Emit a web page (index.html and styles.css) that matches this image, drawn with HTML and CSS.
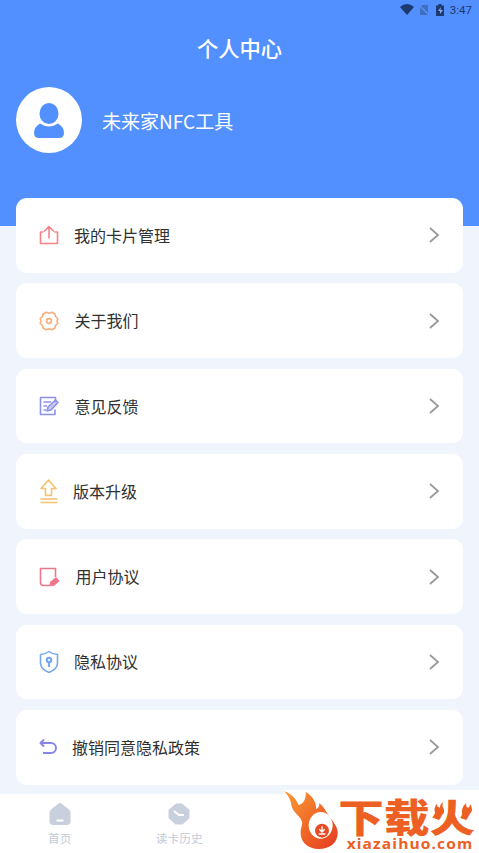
FILE: index.html
```html
<!DOCTYPE html>
<html lang="zh-CN">
<head>
<meta charset="utf-8">
<title>个人中心</title>
<link rel="stylesheet" href="styles.css">
</head>
<body>
<div class="screen">
  <header class="hero">
    <div class="status">
      <svg class="wifi" viewBox="0 0 14 11"><path d="M0 3Q7-3 14 3L7 11Z"/></svg>
      <svg class="sim" viewBox="0 0 10 12"><path d="M3 1h6v10H1V3z"/><path class="slash" d="M0 1l10 10"/></svg>
      <svg class="battery" viewBox="0 0 8 12"><path d="M0 1.500h2.500V0h3v1.500H8V12H0z"/><path class="bolt" d="M5 3L2 7h2v3l3-4H4.500z"/></svg>
      <span class="clock">3:47</span>
    </div>
    <h1 class="title">个人中心</h1>
    <div class="profile">
      <div class="avatar">
        <svg viewBox="0 0 66 66"><ellipse cx="33" cy="26.500" rx="9.500" ry="10.500"/><path d="M24 36.500Q33 42.500 42 36.500Q48 40 48 46Q48 51 43 51H23Q18 51 18 46Q18 40 24 36.500Z"/></svg>
      </div>
      <span class="name">未来家NFC工具</span>
    </div>
  </header>
  <main class="list">
    <a class="card">
      <svg class="icon red" viewBox="0 0 22 26"><path d="M5.500 10H2.500V21.500H19.500V10H16.500M11 16.500V4.500M6 9.500L11 4.500L16 9.500"/></svg>
      <span class="label">我的卡片管理</span><svg class="arrow" viewBox="0 0 12 18"><path d="M2 2L10 9L2 16"/></svg>
    </a>
    <a class="card">
      <svg class="icon orange" viewBox="0 0 22 26"><path d="M8.300 4.300L11 5.200L13.700 4.300L17 6L17.500 8.500L19.800 10.500L19 13L19.800 15.500L17.500 17.500L17 20L13.700 21.700L11 20.800L8.300 21.700L5 20L4.500 17.500L2.200 15.500L3 13L2.200 10.500L4.500 8.500L5 6Z"/><circle cx="11" cy="13" r="2.400"/></svg>
      <span class="label l1">关于我们</span><svg class="arrow" viewBox="0 0 12 18"><path d="M2 2L10 9L2 16"/></svg>
    </a>
    <a class="card">
      <svg class="icon violet" viewBox="0 0 22 26"><path d="M17.500 7.500V4.500H2.500V21.500H17V16.500M5.500 9H13M5.500 13H9M5.500 17H8"/><path class="tint" d="M9 18L10 14L17.500 7L20 9.500L13 17Z"/></svg>
      <span class="label l1">意见反馈</span><svg class="arrow" viewBox="0 0 12 18"><path d="M2 2L10 9L2 16"/></svg>
    </a>
    <a class="card">
      <svg class="icon gold" viewBox="0 0 22 26"><path d="M7.500 17.500V10.500H3L10.500 2L18 10.500H13.500V17.500ZM2.500 21H19.500M2.500 24.500H19.500"/></svg>
      <span class="label l-1">版本升级</span><svg class="arrow" viewBox="0 0 12 18"><path d="M2 2L10 9L2 16"/></svg>
    </a>
    <a class="card">
      <svg class="icon pink" viewBox="0 0 22 26"><path d="M11.500 21.500H5.500Q2.500 21.500 2.500 18.500V4.500H17.500V13"/><path class="tip" d="M12 21.500L13 18L18 14L20.500 17L16 21Z"/></svg>
      <span class="label l2">用户协议</span><svg class="arrow" viewBox="0 0 12 18"><path d="M2 2L10 9L2 16"/></svg>
    </a>
    <a class="card">
      <svg class="icon blue" viewBox="0 0 22 26"><path d="M11 2.500Q14 5 19.500 5.500V14Q19.500 20 11 23.500Q2.500 20 2.500 14V5.500Q8 5 11 2.500Z"/><circle class="thick" cx="11" cy="11" r="2.200"/><path class="thick" d="M11 13V18"/></svg>
      <span class="label">隐私协议</span><svg class="arrow" viewBox="0 0 12 18"><path d="M2 2L10 9L2 16"/></svg>
    </a>
    <a class="card">
      <svg class="icon indigo" viewBox="0 0 22 26"><path d="M6 5.500L2.500 9L6 12.500M3 9H13A5 5 0 0 1 13 19H5"/></svg>
      <span class="label l-2">撤销同意隐私政策</span><svg class="arrow" viewBox="0 0 12 18"><path d="M2 2L10 9L2 16"/></svg>
    </a>
  </main>
  <nav class="tabs">
    <a class="tab"><svg viewBox="0 0 22 22"><path d="M11 0Q12 0 13 1L20 6.500Q21.500 8 21.500 10V18Q21.500 22 17.500 22H4.500Q.500 22 .500 18V10Q.500 8 2 6.500L9 1Q10 0 11 0Z"/><path class="cut" d="M7.500 17.500H14.500"/></svg><span>首页</span></a>
    <a class="tab"><svg viewBox="0 0 22 22"><path d="M8 .500H14L21.500 7V15L14.500 21.500H7.500L.500 15V7Z"/><path class="cut" d="M6 8L11 12H16"/></svg><span>读卡历史</span></a>
  </nav>
  <div class="watermark">
    <svg viewBox="0 0 585 189">
      <defs><linearGradient id="fire" x1="0" y1="0" x2="1" y2="1"><stop offset="0" stop-color="#fa9a38"/><stop offset=".5" stop-color="#f16b28"/><stop offset="1" stop-color="#e43b21"/></linearGradient></defs>
      <path fill="url(#fire)" d="M1 4C25 12 36 28 44 45C58 42 67 28 65 6C88 18 98 42 96 57Q107 54 106 40C122 51 128 72 141 86C158 107 164 122 160 139C155 164 132 177 107 177C70 178 47 154 50 123C52 106 59 100 50 86C40 71 26 65 22 44Q19 24 1 4Z"/>
      <ellipse cx="110" cy="106" rx="36" ry="40" fill="#fff"/>
      <circle cx="114" cy="122" r="21" fill="#e64b24"/>
      <path class="down" d="M114 109V124M106 118L114 126L122 118M104 132H124"/>
      <g fill="#ed6024">
        <text class="brand" x="163" y="127" textLength="410" lengthAdjust="spacingAndGlyphs">下载火</text>
        <path d="M457 75Q444 58 460 40Q457 53 468 54Q467 43 477 36Q473 50 480 59Q483 73 466 78ZM536 76Q528 56 547 38Q544 48 552 54Q558 49 559 43Q572 65 550 75Z"/>
        <text class="site" x="188" y="176" textLength="380" lengthAdjust="spacingAndGlyphs">xiazaihuo.com</text>
      </g>
    </svg>
  </div>
</div>
</body>
</html>
```

FILE: styles.css
```css
* { box-sizing: border-box; }
body {
  margin: 0;
  font-family: "Noto Sans CJK SC", sans-serif;
  background: #f0f4fc;
}
.screen {
  position: relative;
  height: 853px;
  overflow: hidden;
  display: flex;
  flex-direction: column;
}
svg { display: block; flex: none; overflow: visible; }
.hero { height: 226px; flex: none; background: #528fff; color: #fff; }
.status {
  height: 19px;
  padding-right: 7px;
  display: flex;
  align-items: center;
  justify-content: flex-end;
  color: #1e396d;
  fill: #1e396d;
}
.wifi { width: 14px; height: 11px; margin-right: 5px; }
.sim { width: 10px; height: 12px; margin-right: 7px; fill: #416fc0; }
.slash { stroke: #528fff; stroke-width: 1.5; }
.battery { width: 8px; height: 12px; margin-right: 6px; }
.bolt { fill: #83aaf1; }
.clock { font: 400 11.5px/20px Roboto, sans-serif; }
.title {
  margin: 11px 0 0;
  font-size: 21.3px;
  line-height: 36px;
  font-weight: 500;
  text-align: center;
}
.profile { display: flex; align-items: center; margin: 21.4px 0 0 16px; }
.avatar { width: 66px; height: 66px; border-radius: 50%; background: #fff; fill: #528fff; }
.name { margin: 2px 0 0 20px; font-size: 19px; line-height: 30px; }
.list {
  margin: -28px 16px 0;
  display: flex;
  flex-direction: column;
  gap: 10.53px;
}
.card {
  height: 74.8px;
  border-radius: 11px;
  background: #fff;
  display: flex;
  align-items: center;
  padding: 0 23px 0 22px;
}
.icon {
  width: 22px;
  height: 26px;
  fill: none;
  stroke: currentColor;
  stroke-width: 1.6;
  stroke-linejoin: round;
}
.red { color: #f58489; }
.orange { color: #f6ae7c; }
.violet { color: #8c91e9; }
.gold { color: #f5c16d; }
.pink { color: #f0768b; }
.blue { color: #77a9ed; }
.indigo { color: #8785e7; stroke-width: 2; }
.tint { fill: #c6c9fa; }
.tip { fill: currentColor; }
.thick { stroke-width: 2.2; }
.label {
  margin: -1px 0 0 14px;
  font-size: 16px;
  line-height: 24px;
  color: #303030;
}
.l1 { margin-left: 14.5px; }
.l2 { margin-left: 15.5px; }
.l-1 { margin-left: 13px; }
.l-2 { margin-left: 12px; }
.arrow {
  width: 12px;
  height: 18px;
  margin-left: auto;
  fill: none;
  stroke: #999;
  stroke-width: 1.8;
}
.tabs {
  height: 59px;
  margin-top: auto;
  flex: none;
  display: flex;
  background: #fff;
}
.tab {
  width: 119.5px;
  padding-top: 9px;
  display: flex;
  flex-direction: column;
  align-items: center;
  gap: 4px;
  color: #c3cad8;
  font-size: 11.7px;
  line-height: 17px;
}
.tab svg { width: 22px; height: 22px; fill: #c8cfdd; }
.tab .cut { fill: none; stroke: #fff; stroke-width: 2; }
.watermark {
  position: absolute;
  right: 0;
  bottom: 0;
  width: 195px;
  height: 63px;
  background: #fff;
}
.watermark svg { width: 195px; height: 63px; }
.down { fill: none; stroke: #fff; stroke-width: 4; }
.brand {
  font-family: "Noto Sans CJK SC", sans-serif;
  font-weight: 900;
  font-size: 115px;
}
.site { font-family: "Open Sans", "Noto Sans", sans-serif; font-weight: 700; font-size: 42px; letter-spacing: 3px; }
```
